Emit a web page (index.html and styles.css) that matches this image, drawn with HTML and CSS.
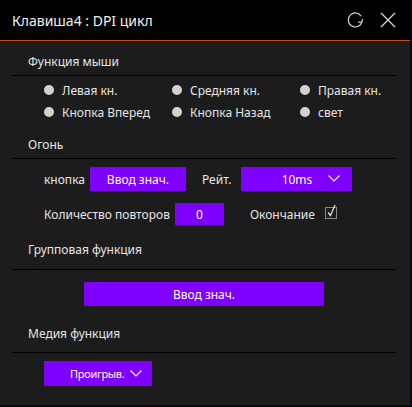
FILE: index.html
```html
<!DOCTYPE html>
<html lang="ru">
<head>
<meta charset="utf-8">
<link rel="stylesheet" href="styles.css">
</head>
<body>
<div class="window">
  <div class="titlebar">
    <div class="title">Клавиша4 : DPI цикл</div>
    <div class="title-icons">
      <svg class="icon-refresh" width="18" height="16" viewBox="0 0 18 16">
        <path d="M14.2 4.2 A7 7 0 1 0 14.6 11" fill="none" stroke="#d8d8d8" stroke-width="1.2"/>
        <path d="M11.2 10.2 L14.8 10.4 L15.6 7.2" fill="none" stroke="#d8d8d8" stroke-width="1.2"/>
      </svg>
      <svg class="icon-close" width="16" height="16" viewBox="0 0 16 16">
        <path d="M1 1 L15 15 M15 1 L1 15" stroke="#d8d8d8" stroke-width="1.3"/>
      </svg>
    </div>
  </div>

  <div class="content">
    <div class="sec-head sec-mouse">Функция мыши</div>
    <div class="radio-grid">
      <div class="radio"><span class="dot"></span>Левая кн.</div>
      <div class="radio"><span class="dot"></span>Средняя кн.</div>
      <div class="radio"><span class="dot"></span>Правая кн.</div>
      <div class="radio"><span class="dot"></span>Кнопка Вперед</div>
      <div class="radio"><span class="dot"></span>Кнопка Назад</div>
      <div class="radio"><span class="dot"></span>свет</div>
    </div>

    <div class="sec-head sec-fire">Огонь</div>
    <div class="fire-body">
      <div class="row row-1">
        <span class="lbl">кнопка</span>
        <div class="pbtn btn-key">Ввод знач.</div>
        <span class="lbl lbl-rate">Рейт.</span>
        <div class="pbtn dropdown-rate">
          <span class="dd-text">10ms</span>
          <svg class="chev" width="12" height="7" viewBox="0 0 12 7"><path d="M0.5 0.5 L6 6 L11.5 0.5" fill="none" stroke="#fff" stroke-width="1.1"/></svg>
        </div>
      </div>
      <div class="row row-2">
        <span class="lbl">Количество повторов</span>
        <div class="pbtn input-count">0</div>
        <span class="lbl lbl-end">Окончание</span>
        <svg class="checkbox" width="16" height="16" viewBox="0 0 16 16">
          <rect x="1.5" y="3.5" width="11" height="11" fill="none" stroke="#8a8a8a" stroke-width="1"/>
          <path d="M4 8.5 L6.5 11.5 L11 1" fill="none" stroke="#e8e8e8" stroke-width="1.2"/>
        </svg>
      </div>
    </div>

    <div class="sec-head sec-group">Групповая функция</div>
    <div class="group-body">
      <div class="pbtn btn-group">Ввод знач.</div>
    </div>

    <div class="sec-head sec-media">Медия функция</div>
    <div class="media-body">
      <div class="pbtn dropdown-media">
        <span class="dd-text">Проигрыв.</span>
        <svg class="chev" width="12" height="7" viewBox="0 0 12 7"><path d="M0.5 0.5 L6 6 L11.5 0.5" fill="none" stroke="#fff" stroke-width="1.1"/></svg>
      </div>
    </div>
  </div>
</div>
</body>
</html>
```

FILE: styles.css
```css
html, body {
  margin: 0;
  padding: 0;
}
body {
  background: #0b0710;
  width: 412px;
  height: 407px;
  overflow: hidden;
  font-family: "Noto Sans", "DejaVu Sans", sans-serif;
  font-size: 12px;
  color: #e6e6e6;
}
.window {
  width: 410px;
  height: 405px;
  background: #1c1c1c;
  display: flex;
  flex-direction: column;
}
.titlebar {
  height: 40px;
  background: #000;
  border-bottom: 1px solid #c8501e;
  display: flex;
  align-items: center;
  justify-content: space-between;
  padding: 0 14px 0 12px;
  flex-shrink: 0;
}
.title {
  font-size: 14px;
  color: #f2f2f2;
  margin-top: 1px;
}
.title-icons {
  display: flex;
  align-items: center;
  gap: 15px;
}
.content {
  padding: 0 14px 0 12px;
}
.sec-head {
  padding-left: 16px;
  line-height: 20px;
  border-bottom: 1px solid #000;
  color: #e6e6e6;
}
.sec-mouse { padding-top: 11px; padding-bottom: 3px; }
.sec-fire { margin-top: 12px; padding-bottom: 3px; }
.sec-group { margin-top: 15px; padding-bottom: 9px; }
.sec-media { margin-top: 18px; padding-bottom: 8px; }

.radio-grid {
  display: grid;
  grid-template-columns: 128px 128px 1fr;
  grid-auto-rows: 22px;
  padding: 3px 0 0 32px;
}
.radio {
  display: flex;
  align-items: center;
  gap: 8px;
}
.dot {
  width: 10px;
  height: 10px;
  border-radius: 50%;
  background: #d2d2d2;
}

.fire-body {
  padding: 8px 0 0 32px;
  display: flex;
  flex-direction: column;
  gap: 12px;
}
.row {
  display: flex;
  align-items: center;
}
.pbtn {
  background: #8000ff;
  color: #fff;
  display: flex;
  align-items: center;
  justify-content: center;
}
.btn-key {
  width: 96px;
  height: 24px;
  margin-left: 5px;
}
.lbl-rate { margin-left: 16px; }
.dropdown-rate {
  width: 111px;
  height: 24px;
  margin-left: 10px;
  position: relative;
}
.dropdown-rate .chev { position: absolute; right: 12px; top: 8px; }
.input-count {
  width: 49px;
  height: 22px;
  margin-left: 5px;
}
.lbl-end { margin-left: 26px; }
.checkbox { margin-left: 9px; margin-top: -4px; }

.group-body {
  padding: 12px 0 0 72px;
}
.btn-group {
  width: 240px;
  height: 24px;
}
.media-body {
  padding: 8px 0 0 32px;
}
.dropdown-media {
  width: 108px;
  height: 25px;
  justify-content: flex-start;
  padding-left: 26px;
  box-sizing: border-box;
  position: relative;
}
.dropdown-media .dd-text {
  font-size: 11px;
  letter-spacing: -0.3px;
}
.dropdown-media .chev { position: absolute; right: 10px; top: 9px; }
```
